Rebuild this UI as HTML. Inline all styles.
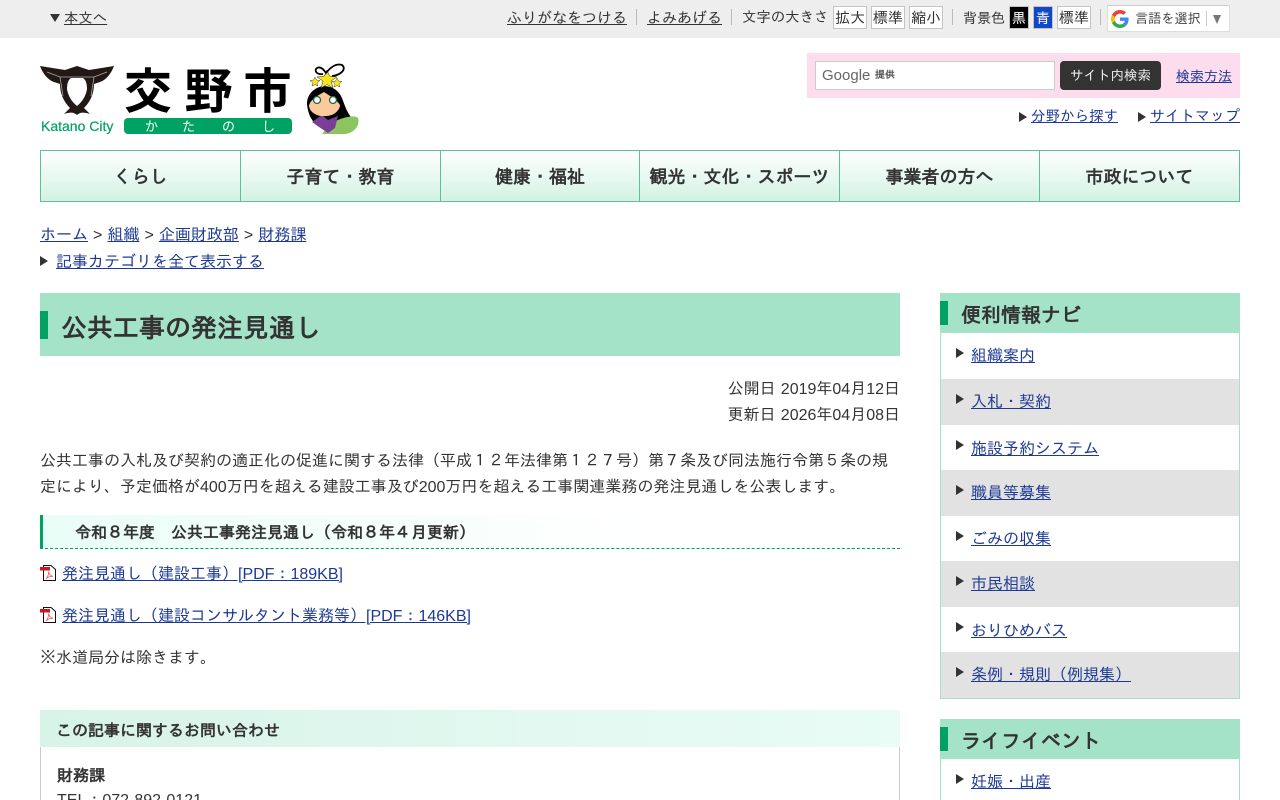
<!DOCTYPE html>
<html lang="ja"><head><meta charset="utf-8"><title>公共工事の発注見通し</title>
<style>
*{box-sizing:border-box}
html,body{margin:0;padding:0;width:1280px;height:800px;overflow:hidden;background:#fff}
body{font-family:"Liberation Sans","IPAGothic",sans-serif;font-size:16px;color:#333;position:relative}
a{color:#1d3994;text-decoration:underline}
.a{position:absolute;white-space:nowrap;line-height:20px}
.top a{color:#333}
.sep{position:absolute;width:1px;height:16px;top:9px;background:#bbb}
.btn{position:absolute;top:6px;height:23px;border:1px solid #c4c4c4;background:#fff;font-size:15px;line-height:23px;text-align:center;color:#333}
.tri{position:absolute;width:0;height:0;border-style:solid;border-color:transparent transparent transparent #333;border-width:5px 0 5px 8px}
.nav{position:absolute;left:40px;top:150px;width:1200px;height:52px;border:1px solid #5cc09c;background:linear-gradient(#fff,#d3f2e3);display:flex}
.nav div{height:50px;line-height:52px;text-align:center;font-weight:bold;font-size:18px;color:#333;border-left:1px solid #5cc09c;white-space:nowrap}
.nav div:first-child{border-left:0}
.side{position:absolute;left:940px;width:300px;border:1px solid #a5e3c8;border-top:0}
.sh{position:absolute;left:940px;width:300px;height:40px;background:#a5e3c8;font-weight:bold;font-size:20px;line-height:46px;padding-left:21px;color:#333}
.sh i{position:absolute;left:0;top:8px;width:8px;height:24px;background:#00a264}
.it{position:absolute;left:0;width:298px;height:46px}
.it.g{background:#e2e2e2}
.it .tri{left:15px;top:15px}
.it a{position:absolute;left:30px;top:14px;line-height:20px;white-space:nowrap}
.pdf{position:absolute;width:16px;height:16px}
</style></head><body>

<div class="top" style="position:absolute;left:0;top:0;width:1280px;height:38px;background:#eee">
<div style="position:absolute;left:50px;top:14px;width:0;height:0;border-style:solid;border-color:#333 transparent transparent;border-width:8px 5px 0"></div>
<a class="a" style="left:64px;top:9px;font-size:14.4px">本文へ</a>
<a class="a" style="left:507px;top:9px;font-size:15px">ふりがなをつける</a><div class="sep" style="left:636px"></div>
<a class="a" style="left:647px;top:9px;font-size:15px">よみあげる</a><div class="sep" style="left:731px"></div>
<span class="a" style="left:742px;top:8px;font-size:14.4px">文字の大きさ</span>
<div class="btn" style="left:833px;width:34px">拡大</div>
<div class="btn" style="left:871px;width:34px">標準</div>
<div class="btn" style="left:909px;width:34px">縮小</div>
<div class="sep" style="left:952px"></div>
<span class="a" style="left:963px;top:8px;font-size:14px">背景色</span>
<div class="btn" style="left:1009px;width:20px;background:#000;color:#fff;font-size:14px">黒</div>
<div class="btn" style="left:1033px;width:20px;background:#1247c8;color:#fff;font-size:14px">青</div>
<div class="btn" style="left:1057px;width:34px">標準</div>
<div class="sep" style="left:1100px"></div>
<div style="position:absolute;left:1107px;top:5px;width:123px;height:27px;background:#fff;border:1px solid #ddd;border-top-color:#ccc">
<svg width="18" height="18" viewBox="0 0 48 48" style="position:absolute;left:3px;top:4px"><path fill="#EA4335" d="M24 9.5c3.5 0 6.700 1.200 9.200 3.600l6.900-6.900C35.900 2.400 30.500 0 24 0 14.600 0 6.500 5.400 2.600 13.200l8 6.200C12.400 13.700 17.700 9.500 24 9.500z"/><path fill="#4285F4" d="M46.900 24.500c0-1.600-.1-3.100-.4-4.500H24v9h12.900c-.6 3-2.200 5.500-4.700 7.200l7.700 6c4.500-4.200 7-10.300 7-17.700z"/><path fill="#FBBC05" d="M10.500 28.600c-.5-1.400-.8-3-.8-4.600s.3-3.200.8-4.600l-8-6.200C.9 16.500 0 20.100 0 24s.9 7.500 2.600 10.800l7.900-6.200z"/><path fill="#34A853" d="M24 48c6.500 0 11.900-2.100 15.900-5.800l-7.700-6c-2.100 1.400-4.900 2.300-8.200 2.300-6.300 0-11.600-4.200-13.500-9.900l-8 6.200C6.500 42.600 14.600 48 24 48z"/></svg>
<span class="a" style="left:27px;top:3px;font-size:13.200px;color:#444">言語を選択</span>
<div style="position:absolute;left:98px;top:5px;width:1px;height:15px;background:#ccc"></div>
<span style="position:absolute;left:105px;top:9px;width:0;height:0;border-style:solid;border-color:#777 transparent transparent;border-width:9px 4.500px 0"></span>
</div>
</div>

<!-- logo -->
<svg width="330" height="76" viewBox="0 0 330 76" style="position:absolute;left:40px;top:62px">
<path fill="#231815" d="M0 4 L25 8 L37 4 L49 8 L74 4 C71 12 66 18 60 20 L54 22 C54 32 50 40 44 46 L50 52 C44 50 40 50 37 53 C34 50 30 50 24 52 L30 46 C24 40 20 32 20 22 L14 20 C8 18 3 12 0 4 Z"/>
<path fill="#fff" d="M31 16 L43 16 C46 18 47 22 47 27 C46 34 42 40 37 44 C32 40 28 34 27 27 C27 22 28 18 31 16 Z"/>
<path fill="none" stroke="#aaa" stroke-width=".8" d="M7 10 L20 15 L54 15 L67 10 M20 15 L23 34 M54 15 L51 34"/>
<text x="1" y="69" font-family="Liberation Sans" font-size="14" fill="#00a264" stroke="#00a264" stroke-width=".2">Katano City</text>
<rect x="84" y="56" width="168" height="16" rx="4" fill="#00a264"/>
<text font-family="Noto Sans CJK JP" font-size="13" fill="#fff" y="69"><tspan x="105">か</tspan><tspan x="142">た</tspan><tspan x="182">の</tspan><tspan x="222">し</tspan></text>
<text font-family="Noto Sans CJK JP" font-size="48" font-weight="bold" fill="#000" y="46"><tspan x="84">交</tspan><tspan x="144.500">野</tspan><tspan x="203.500">市</tspan></text>
<!-- mascot -->
<path fill="#000" d="M283 24 C273 26 267 33 267 42 C268 52 271 58 276 62 L310 64 C316 62 316 60 312 56 C306 50 304 40 301 34 C297 27 291 24 283 24Z"/>
<path fill="#8cc460" d="M290 62 C300 56 314 52 318 56 C320 62 316 70 306 72 L282 72Z"/>
<path fill="#7a3d98" d="M272 60 L282 53 L288 58 L298 54 L295 66 L288 71 L279 65Z"/>
<path fill="#fbc99c" d="M284 30 C277 34 270 38 269 44 C270 51 278 55 286 54 C294 54 300 48 300 43 C297 38 290 34 284 30Z"/>
<circle cx="277" cy="38" r="3.500" fill="#fff" stroke="#264" stroke-width="1.300"/><circle cx="293" cy="38" r="3.500" fill="#fff" stroke="#264" stroke-width="1.300"/>
<path fill="#f7e51e" stroke="#222" stroke-width=".5" d="M287 8 L289.500 14 L297 15 L291 19 L293 26 L287 22.500 L281 26 L283 19 L277 15 L284.500 14Z"/>
<path fill="#f7e51e" stroke="#222" stroke-width=".4" d="M275 15 L276.500 18 L280 18.500 L277 21 L278 24 L275 22.500 L272 24 L273 21 L270 18.500 L273.500 18Z"/>
<path fill="#f7e51e" stroke="#222" stroke-width=".4" d="M297 16 L298.500 19 L302 19.500 L299 22 L300 25 L297 23.500 L294 25 L295 22 L292 19.500 L295.500 19Z"/>
<path fill="none" stroke="#000" stroke-width="1.800" d="M283 12 C276 13 274 8 277 6 C281 4 284 8 286 11 C290 6 296 1 302 3 C307 7 301 13 292 14"/>
</svg>

<!-- search -->
<div style="position:absolute;left:807px;top:53px;width:433px;height:45px;background:#fddcee">
<div style="position:absolute;left:8px;top:8px;width:240px;height:29px;background:#fff;border:1px solid #ccc">
<span class="a" style="left:6px;top:4px;font-size:15px;color:#666">Google</span><span class="a" style="left:59px;top:4px;font-size:10px;font-weight:bold;color:#555">提供</span></div>
<div style="position:absolute;left:253px;top:8px;width:101px;height:29px;background:#333;border-radius:4px;color:#eee;font-size:13.500px;line-height:29px;text-align:center">サイト内検索</div>
<a class="a" style="left:369px;top:13px;font-size:14px">検索方法</a>
</div>
<div class="tri" style="left:1019px;top:112px"></div><a class="a" style="left:1031px;top:107px;font-size:14.500px">分野から探す</a>
<div class="tri" style="left:1138px;top:112px"></div><a class="a" style="left:1150px;top:107px;font-size:15px">サイトマップ</a>

<!-- nav -->
<div class="nav">
<div style="width:199px">くらし</div><div style="width:200px">子育て・教育</div><div style="width:199px">健康・福祉</div><div style="width:200px">観光・文化・スポーツ</div><div style="width:200px">事業者の方へ</div><div style="width:200px">市政について</div>
</div>

<!-- breadcrumb -->
<div class="a" style="left:40px;top:226px;word-spacing:.6px"><a>ホーム</a> &gt; <a>組織</a> &gt; <a>企画財政部</a> &gt; <a>財務課</a></div>
<div class="tri" style="left:40px;top:256px"></div><a class="a" style="left:56px;top:253px">記事カテゴリを全て表示する</a>

<!-- main -->
<div style="position:absolute;left:40px;top:293px;width:860px;height:63px;background:#a5e3c8">
<div style="position:absolute;left:0;top:18px;width:8px;height:28px;background:#00a264"></div>
<div class="a" style="left:21px;top:20px;font-size:26px;line-height:30px;font-weight:bold;color:#333">公共工事の発注見通し</div>
</div>
<div class="a" style="right:380px;top:380px;text-align:right;word-spacing:.8px">公開日 2019年04月12日</div>
<div class="a" style="right:380px;top:406px;text-align:right;word-spacing:.8px">更新日 2026年04月08日</div>
<div class="a" style="left:40px;top:452px">公共工事の入札及び契約の適正化の促進に関する法律（平成１２年法律第１２７号）第７条及び同法施行令第５条の規</div>
<div class="a" style="left:40px;top:478px">定により、予定価格が400万円を超える建設工事及び200万円を超える工事関連業務の発注見通しを公表します。</div>

<div style="position:absolute;left:40px;top:515px;width:860px;height:34px;background:linear-gradient(90deg,#e9fdf7 0%,#fff 70%);border-left:3px solid #00a264;border-bottom:1px dashed #00a264">
<div class="a" style="left:32px;top:9px;font-weight:bold;color:#333">令和８年度　公共工事発注見通し（令和８年４月更新）</div>
</div>

<svg class="pdf" style="left:40px;top:565px" viewBox="0 0 16 16"><path d="M3.500 .5H11L15.500 4.500V15.500H3.500Z" fill="#fff" stroke="#111"/><rect y="2" width="10" height="3.500" fill="#d8121a"/><path d="M6 14C8 12 9 8 8.500 6.500C9 9 11 11 13 11.500C10 11 7 12.500 6 14Z" fill="none" stroke="#e55" stroke-width=".8"/></svg>
<a class="a" style="left:62px;top:565px">発注見通し（建設工事）[PDF：189KB]</a>
<svg class="pdf" style="left:40px;top:607px" viewBox="0 0 16 16"><path d="M3.500 .5H11L15.500 4.500V15.500H3.500Z" fill="#fff" stroke="#111"/><rect y="2" width="10" height="3.500" fill="#d8121a"/><path d="M6 14C8 12 9 8 8.500 6.500C9 9 11 11 13 11.500C10 11 7 12.500 6 14Z" fill="none" stroke="#e55" stroke-width=".8"/></svg>
<a class="a" style="left:62px;top:607px">発注見通し（建設コンサルタント業務等）[PDF：146KB]</a>
<div class="a" style="left:40px;top:649px">※水道局分は除きます。</div>

<div style="position:absolute;left:40px;top:710px;width:860px;height:37px;background:linear-gradient(90deg,#d8f3e8,#e9fcf6)">
<div class="a" style="left:16px;top:12px;font-weight:bold">この記事に関するお問い合わせ</div></div>
<div style="position:absolute;left:40px;top:747px;width:860px;height:60px;border:1px solid #ccc;border-top:0;background:#fff">
<div class="a" style="left:16px;top:20px;font-weight:bold">財務課</div>
<div class="a" style="left:16px;top:44px">TEL：072-892-0121</div>
</div>

<!-- side -->
<div class="sh" style="top:293px"><i></i>便利情報ナビ</div>
<div class="side" style="top:333px;height:366px">
<div class="it" style="top:0"><span class="tri"></span><a>組織案内</a></div>
<div class="it g" style="top:46px"><span class="tri"></span><a>入札・契約</a></div>
<div class="it" style="top:92px"><span class="tri"></span><a style="top:15px">施設予約システム</a></div>
<div class="it g" style="top:137px"><span class="tri"></span><a>職員等募集</a></div>
<div class="it" style="top:183px"><span class="tri"></span><a>ごみの収集</a></div>
<div class="it g" style="top:228px"><span class="tri"></span><a>市民相談</a></div>
<div class="it" style="top:274px"><span class="tri"></span><a style="top:15px">おりひめバス</a></div>
<div class="it g" style="top:319px"><span class="tri"></span><a>条例・規則（例規集）</a></div>
</div>
<div class="sh" style="top:719px"><i></i>ライフイベント</div>
<div class="side" style="top:759px;height:60px">
<div class="it" style="top:0"><span class="tri"></span><a>妊娠・出産</a></div>
</div>
</body></html>
